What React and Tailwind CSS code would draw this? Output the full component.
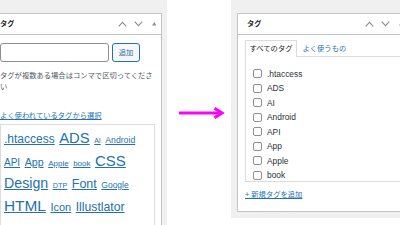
const CLOUD = [
  [
    ['.htaccess', 'text-[12px]'],
    ['ADS', 'text-[14.8px]'],
    ['AI', 'text-[7px]'],
    ['Android', 'text-[8.7px]'],
  ],
  [
    ['API', 'text-[10px]'],
    ['App', 'text-[10.7px]'],
    ['Apple', 'text-[8px]'],
    ['book', 'text-[8px]'],
    ['CSS', 'text-[15px]'],
  ],
  [
    ['Design', 'text-[14.2px]'],
    ['DTP', 'text-[7.3px]'],
    ['Font', 'text-[12.5px]'],
    ['Google', 'text-[8.5px]'],
  ],
  [
    ['HTML', 'text-[15.4px]'],
    ['Icon', 'text-[11px]'],
    ['Illustlator', 'text-[12.2px]'],
  ],
];

const TAGS = ['.htaccess', 'ADS', 'AI', 'Android', 'API', 'App', 'Apple', 'book'];

function HeaderIcons() {
  return (
    <div className="flex items-center pr-[5px] text-[#8c8f94]">
      <svg width="9" height="6" viewBox="0 0 9 6" fill="none" stroke="currentColor" strokeWidth="1.1">
        <path d="M0.7 5.3L4.5 1.3L8.3 5.3" />
      </svg>
      <svg className="ml-[7px]" width="9" height="6" viewBox="0 0 9 6" fill="none" stroke="currentColor" strokeWidth="1.1">
        <path d="M0.7 0.7L4.5 4.7L8.3 0.7" />
      </svg>
      <svg className="ml-[8.7px]" width="4.5" height="3.5" viewBox="0 0 4.5 3.5" fill="currentColor">
        <path d="M2.25 0L4.5 3.5H0Z" />
      </svg>
    </div>
  );
}

function PanelHeader() {
  return (
    <div className="h-[21px] border-b border-[#c3c4c7] flex items-center justify-between pl-[9px]">
      <span className="text-[7.3px] font-semibold text-[#1d2327] leading-none">タグ</span>
      <HeaderIcons />
    </div>
  );
}

function ClassicPanel() {
  return (
    <div className="-ml-[16px] w-[183px] shrink-0 h-[225px] bg-[#f0f0f1] pt-[13px] pl-[6px] pr-[5px]">
      <div className="h-full bg-white border border-b-0 border-[#c3c4c7]">
        <PanelHeader />
        <div className="pl-[9px] pr-[6px] pt-[8px]">
          <div className="flex gap-[3px]">
            <div className="w-[109px] h-[19px] border border-[#8c8f94] rounded-[3px] bg-white" />
            <button className="w-[28px] h-[19px] border border-[#2271b1] rounded-[3px] bg-[#f6f7f7] text-[#2271b1] text-[7.3px] leading-none">
              追加
            </button>
          </div>
          <p className="mt-[7.5px] text-[7.3px] leading-[11px] text-[#50575e] whitespace-nowrap">
            タグが複数ある場合はコンマで区切ってくださ
            <br />い
          </p>
          <a className="block mt-[18.5px] text-[7.3px] leading-[11px] text-[#2271b1] underline whitespace-nowrap">
            よく使われているタグから選択
          </a>
          <div className="mt-[2.5px] border border-b-0 border-[#dcdcde] pl-[3px] pt-[6px] h-[110px]">
            {CLOUD.map((row, i) => (
              <div key={i} className="flex items-baseline gap-x-[4.5px] h-[22.5px] whitespace-nowrap">
                {row.map(([name, size]) => (
                  <a key={name} className={`${size} leading-none text-[#2271b1] underline`}>
                    {name}
                  </a>
                ))}
              </div>
            ))}
          </div>
        </div>
      </div>
    </div>
  );
}

function Arrow() {
  return (
    <div className="w-[64px] shrink-0 h-[225px] bg-white flex items-center pl-[12px]">
      <svg width="46" height="12" viewBox="0 0 46 12" fill="none" stroke="#ff00ff" strokeWidth="3">
        <path d="M0 6H43" />
        <path d="M35.5 1.2L43 6L35.5 10.8" strokeLinejoin="miter" />
      </svg>
    </div>
  );
}

function CheckboxPanel() {
  return (
    <div className="w-[183px] shrink-0 h-[218px] bg-[#f0f0f1] pt-[13px] pl-[6px] pr-[5px]">
      <div className="h-[199px] bg-white border border-[#c3c4c7]">
        <PanelHeader />
        <div className="pl-[7px] pr-[7px] pt-[5px]">
          <div className="flex items-end">
            <div className="relative z-10 -mb-px h-[17px] px-[3.5px] border border-b-0 border-[#dcdcde] bg-white flex items-center text-[7.3px] text-[#1d2327] leading-none">
              すべてのタグ
            </div>
            <a className="ml-[5.5px] mb-[4px] text-[7.3px] text-[#2271b1] leading-none">よく使うもの</a>
          </div>
          <div className="h-[126px] border border-[#dcdcde] overflow-hidden pl-[6.7px] pt-[9.5px]">
            {TAGS.map((t) => (
              <div key={t} className="flex items-center h-[14.5px]">
                <span className="w-[9px] h-[9px] border border-[#8c8f94] rounded-[2px] bg-white shrink-0" />
                <span className="ml-[5.3px] text-[8.4px] text-[#2c3338] leading-none">{t}</span>
              </div>
            ))}
          </div>
          <a className="block mt-[6.5px] text-[7.3px] leading-[11px] text-[#2271b1] underline whitespace-nowrap">
            + 新規タグを追加
          </a>
        </div>
      </div>
    </div>
  );
}

export default function App() {
  return (
    <div className="w-[400px] h-[225px] overflow-hidden bg-white flex items-start font-['Liberation_Sans','Noto_Sans_CJK_JP',sans-serif]">
      <ClassicPanel />
      <Arrow />
      <CheckboxPanel />
    </div>
  );
}
